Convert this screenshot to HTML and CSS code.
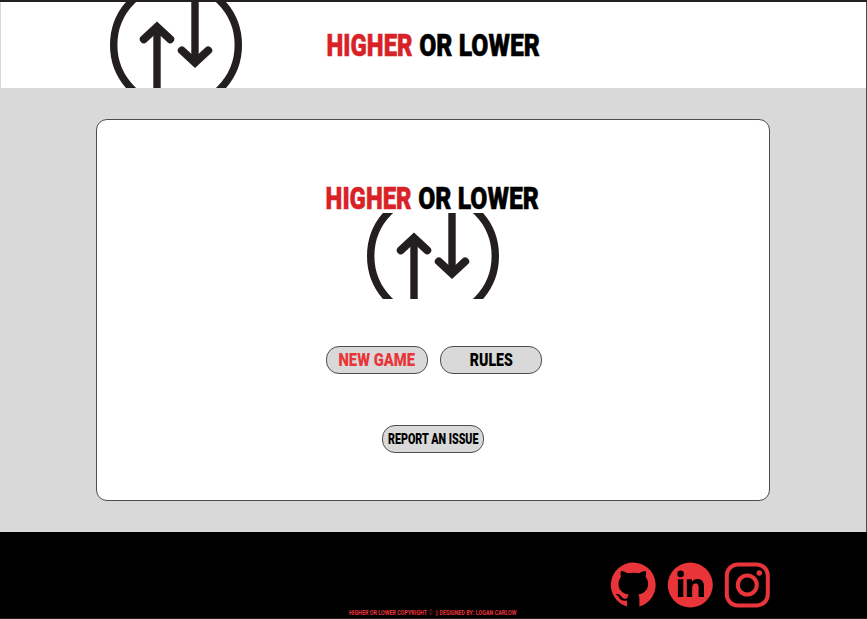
FILE: index.html
```html
<!DOCTYPE html>
<html lang="en">
<head>
<meta charset="utf-8">
<title>Higher or Lower</title>
<link rel="stylesheet" href="styles.css">
</head>
<body>
<svg class="defs" aria-hidden="true">
  <symbol id="logo" viewBox="0 0 132 86">
    <g fill="none" stroke="#231f20" stroke-width="7.4">
      <circle cx="66" cy="43" r="62.3"/>
      <path d="M47 90V26M85-4V60"/>
      <path stroke-linecap="round" stroke-width="8" d="M33.8 37.2L47 25L60.2 37.2M71.8 48.4L85 60.6L98.2 48.4"/>
    </g>
  </symbol>
</svg>
<div class="page">
  <header class="header">
    <svg class="logo" role="img" aria-label="Logo"><use href="#logo"/></svg>
    <svg class="title" viewBox="0 0 216 40">
      <text class="red" x="0.6" y="31" textLength="86" lengthAdjust="spacingAndGlyphs">HIGHER</text>
      <text x="93.2" y="31" textLength="120.8" lengthAdjust="spacingAndGlyphs">OR LOWER</text>
    </svg>
  </header>
  <main class="main">
    <section class="card">
      <svg class="title" viewBox="0 0 216 40">
        <text class="red" x="-0.4" y="31" textLength="86" lengthAdjust="spacingAndGlyphs">HIGHER</text>
        <text x="92.2" y="31" textLength="120.8" lengthAdjust="spacingAndGlyphs">OR LOWER</text>
      </svg>
      <svg class="logo" role="img" aria-label="Logo"><use href="#logo"/></svg>
      <div class="actions">
        <button class="button new-game"><svg viewBox="0 0 100 26"><text x="11.5" y="19.2" textLength="76.5" lengthAdjust="spacingAndGlyphs">NEW GAME</text></svg></button>
        <button class="button"><svg viewBox="0 0 100 26"><text x="28.8" y="19.2" textLength="43" lengthAdjust="spacingAndGlyphs">RULES</text></svg></button>
      </div>
      <button class="button report"><svg viewBox="0 0 100 26"><text x="5" y="17.8" textLength="90.5" lengthAdjust="spacingAndGlyphs">REPORT AN ISSUE</text></svg></button>
    </section>
  </main>
  <footer class="footer">
    <svg class="copyright" viewBox="0 0 170 10">
      <text x="0" y="7.5" textLength="167.5" lengthAdjust="spacingAndGlyphs">HIGHER OR LOWER COPYRIGHT <tspan class="dim">©</tspan>&#160; || DESIGNED BY: LOGAN CARLOW</text>
    </svg>
    <nav class="social">
      <a aria-label="GitHub"><svg viewBox="-.3 0 46 46">
        <path d="M23 .5A22.5 22.5 0 0 0 16.8 44.6V38.5C10.3 39.8 9.3 36.5 8.5 35.1C7.3 33.2 5.5 33.2 5.9 32.3C8.4 31 10.5 33.8 11.8 35.4C13.1 37 15.1 37 17 36.3C17.3 34.4 17.9 33.4 18.5 32.5C11.6 31.5 8.2 27.5 8.2 21.8C8.2 19 9 16.8 10.7 14.9C10.1 12.6 10.1 10.7 10.7 9C13.3 9 15.8 10.5 17.2 11.3Q23 10 28.8 11.3C30.2 10.5 32.7 9 35.3 9C35.9 10.7 35.9 12.6 35.3 14.9C37 16.8 37.8 19 37.8 21.8C37.8 27.5 34.4 31.5 27.8 32.5C29 33.7 29.1 35.5 29.1 37.3V44.6A22.5 22.5 0 0 0 23 .5Z"/>
      </svg></a>
      <a aria-label="LinkedIn"><svg viewBox="-.3 0 46 46">
        <circle cx="23" cy="23" r="22.5"/>
        <g fill="#000"><circle cx="13.3" cy="11.9" r="3.3"/><path d="M10.6 17.3H16V35H10.6ZM19.5 17.3H24.7V19.7C26.1 17.8 28 16.9 30.2 16.9C34.8 16.9 36.7 20 36.7 24.5V35H31.3V25.8C31.3 23.3 30.9 21.4 28.4 21.4C25.8 21.4 24.9 23.3 24.9 25.8V35H19.5Z"/></g>
      </svg></a>
      <a aria-label="Instagram"><svg viewBox="-.3 0 46 46">
        <g fill="none" stroke="#e9353a" stroke-width="4"><rect x="2.5" y="2.5" width="41" height="41" rx="11"/><circle cx="23" cy="23" r="9.5"/></g>
        <circle cx="35" cy="11" r="2.7"/>
      </svg></a>
    </nav>
  </footer>
</div>
</body>
</html>
```

FILE: styles.css
```css
* { box-sizing: border-box; }
body { margin: 0; background: #000; font-family: Roboto, "Liberation Sans", sans-serif; }
svg { display: block; }
text { font-weight: 900; }
.defs { width: 0; height: 0; position: absolute; }
.page { height: 619px; display: flex; flex-direction: column; border-top: 2px solid #231f20; overflow: hidden; }
.header { height: 86px; flex: none; display: flex; align-items: flex-start; background: #fff; padding-left: 109px; border-left: 1px solid #d9d9d9; border-right: 1px solid #4d4d4d; }
.logo { width: 132px; height: 86px; flex: none; }
.title { width: 216px; height: 40px; flex: none; font-size: 31.6px; stroke: #000; stroke-width: .5px; overflow: visible; }
.header .title { margin: 23px 0 0 84px; }
.red { fill: #d82227; stroke: #d82227; }
.main { height: 444px; flex: none; background: #d9d9d9; border-right: 1px solid #4d4d4d; padding: 31px 96px 31px; }
.card { width: 674px; height: 382px; background: #fff; border: 1px solid #4d4d4d; border-radius: 11px; display: flex; flex-direction: column; align-items: center; padding-top: 58px; }
.card .title { margin-left: 1px; }
.card .logo { margin-top: -5px; }
.actions { display: flex; gap: 12px; margin: 47px 0 51px 1px; }
.button { width: 102px; height: 28px; padding: 0; background: #d9d9d9; border: 1px solid #4d4d4d; border-radius: 13px; font-family: inherit; font-size: 19px; flex: none; }
.button svg { width: 100px; height: 26px; overflow: visible; }
.new-game { fill: #e9353a; }
.report { font-size: 15px; }
.footer { flex: 1; background: #000; border-bottom: 1px solid #231f20; display: grid; grid-template-columns: 349px 170px 1fr; }
.copyright { grid-column: 2; width: 170px; height: 10px; align-self: end; margin-bottom: 1px; font-size: 7.2px; fill: #e9353a; overflow: visible; }
.copyright text { font-weight: 700; }
.dim { fill: #7c2528; }
.social { display: flex; gap: 11px; margin: 30px 0 0 91px; }
.social svg { width: 46px; height: 46px; fill: #e9353a; }
```
